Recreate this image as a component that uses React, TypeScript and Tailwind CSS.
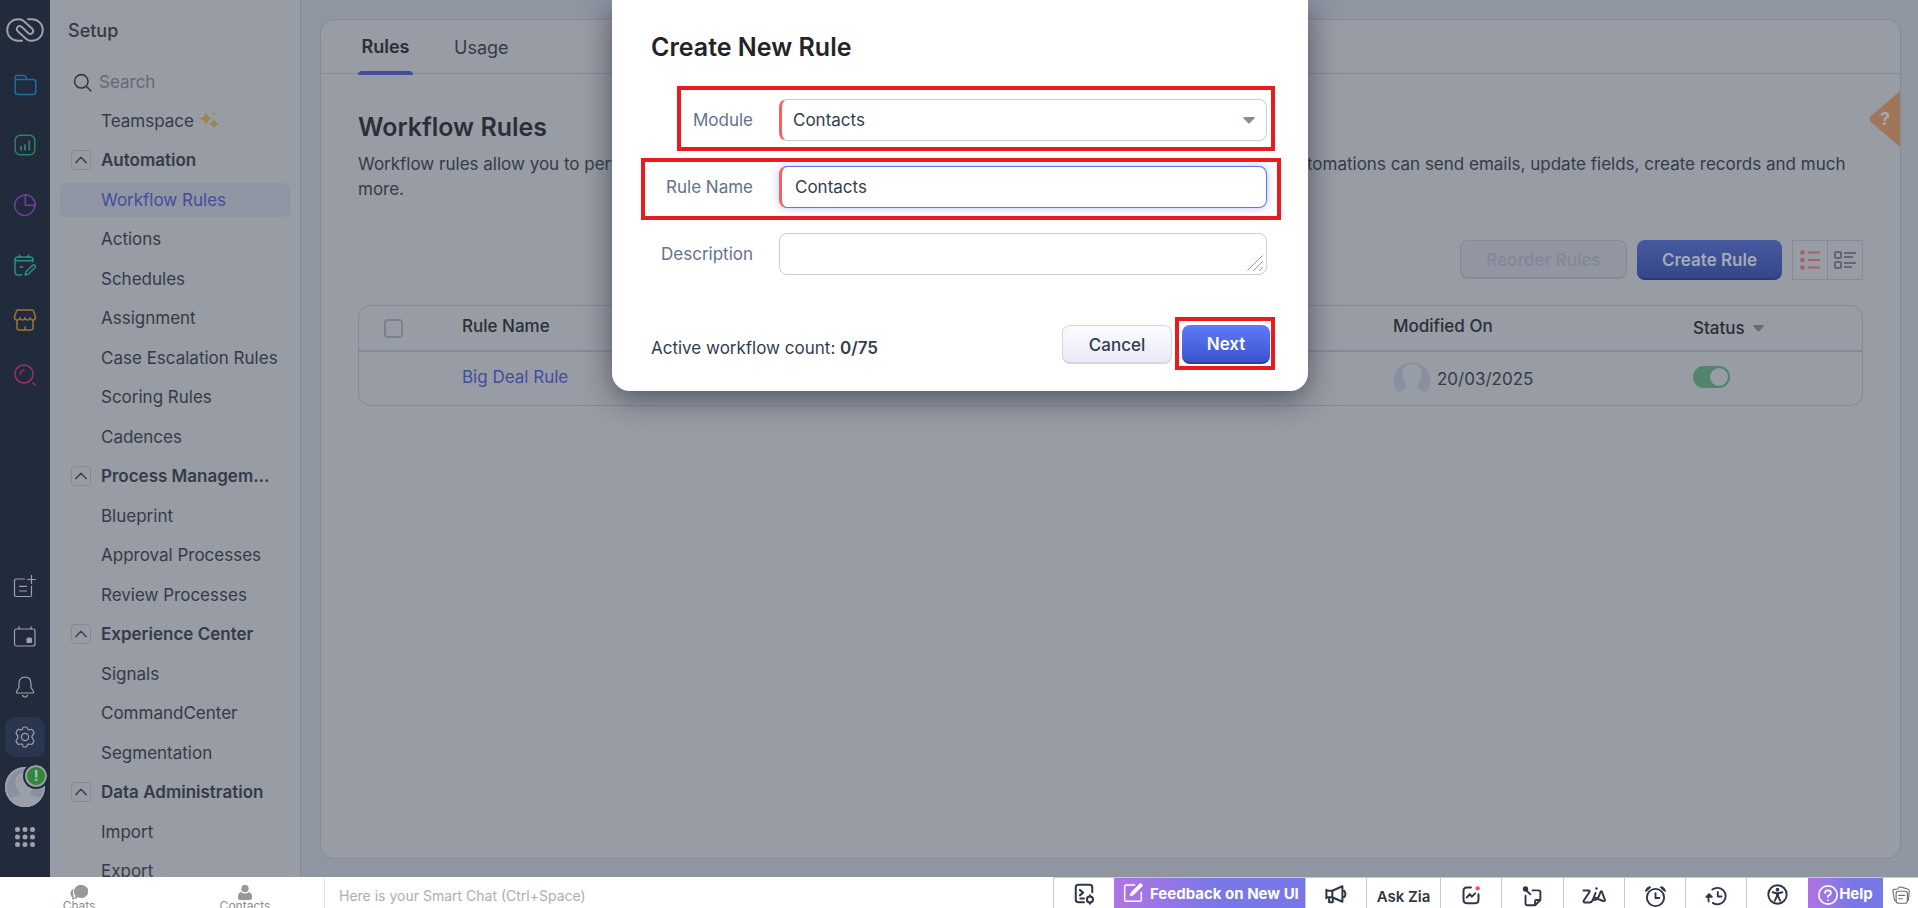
import type { ReactNode } from "react";

const setupItems = [
  { label: "Teamspace", sparkle: true },
  { label: "Automation", group: true },
  { label: "Workflow Rules", active: true },
  { label: "Actions" },
  { label: "Schedules" },
  { label: "Assignment" },
  { label: "Case Escalation Rules" },
  { label: "Scoring Rules" },
  { label: "Cadences" },
  { label: "Process Managem...", group: true },
  { label: "Blueprint" },
  { label: "Approval Processes" },
  { label: "Review Processes" },
  { label: "Experience Center", group: true },
  { label: "Signals" },
  { label: "CommandCenter" },
  { label: "Segmentation" },
  { label: "Data Administration", group: true },
  { label: "Import" },
  { label: "Export" },
];

function Icon({
  size = 24,
  stroke = 1.5,
  className = "",
  children,
}: {
  size?: number;
  stroke?: number;
  className?: string;
  children: ReactNode;
}) {
  return (
    <svg
      width={size}
      height={size}
      viewBox="0 0 24 24"
      fill="none"
      stroke="currentColor"
      strokeWidth={stroke}
      strokeLinecap="round"
      strokeLinejoin="round"
      className={`shrink-0 ${className}`}
      aria-hidden="true"
    >
      {children}
    </svg>
  );
}

function RailButton({
  label,
  className = "",
  children,
}: {
  label: string;
  className?: string;
  children: ReactNode;
}) {
  return (
    <button
      type="button"
      aria-label={label}
      className={`flex size-10 shrink-0 items-center justify-center rounded-[10px] ${className}`}
    >
      {children}
    </button>
  );
}

function Rail() {
  return (
    <nav className="flex w-[50px] shrink-0 flex-col items-center bg-[#212b3c] pt-[18px] pb-5 text-[#9da1a9]">
      <svg width="38" height="24" viewBox="0 0 38 24" fill="none" stroke="currentColor" strokeWidth="1.900" strokeLinecap="round" aria-hidden="true">
        <path d="M16 22.800H12A10.800 10.800 0 0 1 12 1.200H13C15 1.200 16.500 2 18 3.300L26 10.500C29 13.500 25.500 17.800 22.500 15.200L15.500 8.800C12.500 6.200 9 10.500 12 13.500L20 20.700C21.500 22 23 22.800 25 22.800H26A10.800 10.800 0 0 0 26 1.200H22" />
      </svg>

      <div className="mt-[23px] flex flex-col gap-5">
        <RailButton label="Folders" className="text-[#1c6fa5]">
          <Icon>
            <path d="M2.200 7V4.200Q2.200 2.400 4 2.400H11Q12.500 2.400 12.900 4L13.700 6.500H19.800Q22.800 6.500 22.800 9.500V18.500Q22.800 21.500 19.800 21.500H5Q2.200 21.500 2.200 18.700V6.500H13.700" />
          </Icon>
        </RailButton>
        <RailButton label="Reports" className="text-[#30835f]">
          <Icon>
            <rect x="2.200" y="2.200" width="19.600" height="19.600" rx="5" />
            <path d="M8 14V16.800M12 12V16.800M16.300 8.500V16.800" strokeWidth="1.800" />
          </Icon>
        </RailButton>
        <RailButton label="Analytics" className="text-[#703f9c]">
          <Icon>
            <path d="M8.800 2.800A10 10 0 1 0 21.500 14" />
            <path d="M12.300 1.800A10 10 0 0 1 22.200 12.300H12.300Z" />
            <path d="M22 12.300L21.500 14M12.300 2L8.800 2.800" />
          </Icon>
        </RailButton>
        <RailButton label="My requests" className="text-[#289080]">
          <Icon>
            <path d="M20 8.800V7Q20 4 17 4H5Q2 4 2 7V19Q2 22 5 22H8.500M2.300 7.700H19.800M6.500 2V4.500M15.500 2V4.500M7.300 14H9.800" />
            <path d="M12.200 22L13 18.800L19.700 12.200Q21 11.300 22 12.300Q22.900 13.300 22 14.500L15.300 21.200Z" />
          </Icon>
        </RailButton>
      </div>
      <div className="mt-[15px] flex flex-col gap-[15px]">
        <RailButton label="Marketplace" className="text-[#a2742e]">
          <Icon>
            <path d="M5 2H19Q20 2 20.500 3L22.500 9Q22.500 12 20 12Q17.500 12 17 9.800Q16.500 12 14.500 12Q12.500 12 12 9.800Q11.500 12 9.500 12Q7.500 12 7 9.800Q6.500 12 4 12Q1.500 12 1.500 9L3.500 3Q4 2 5 2Z" />
            <path d="M4 12.500V20Q4 22 6 22H18Q20 22 20 20V12.500M12 19V21.500" />
          </Icon>
        </RailButton>
        <RailButton label="Zia search" className="text-[#9c3064]">
          <Icon>
            <circle cx="11" cy="11" r="9" />
            <path d="M7.300 11.200Q7.500 7.800 11 7.300M19.800 20L22 22" />
          </Icon>
        </RailButton>
      </div>

      <div className="mt-auto flex flex-col gap-[10px]">
        <RailButton label="New note">
          <Icon stroke={1.2}>
            <path d="M11.500 4H3Q1.500 4 1.500 5.500V20Q1.500 21.500 3 21.500H17Q18.500 21.500 18.500 20V11M6.500 11.300H13.500M6.500 16H13.500M18.500 0.500V8.500M14.500 4.500H22.500" />
          </Icon>
        </RailButton>
        <RailButton label="Calendar">
          <Icon stroke={1.2}>
            <rect x="1.500" y="4" width="20.500" height="17" rx="2" />
            <path d="M6 1.500V4M18 1.500V4" />
            <rect x="14" y="13" width="4.500" height="4.500" rx="1" fill="currentColor" />
          </Icon>
        </RailButton>
        <RailButton label="Notifications">
          <Icon stroke={1.2}>
            <path d="M12 2.200C7.500 2.200 6 5.500 6 8.500V12.500L3.500 16.500Q3 18 4.500 18H19.500Q21 18 20.500 16.500L18 12.500V8.500C18 5.500 16.500 2.200 12 2.200ZM9.500 20.500Q12 23.500 14.500 20.500" />
          </Icon>
        </RailButton>
        <RailButton label="Setup" className="bg-[#2a3650]">
          <Icon stroke={1.2}>
            <path d="M9.800 3.200Q10.100 2 11.200 2H12.800Q13.900 2 14.200 3.200Q14.700 5.300 16.800 4.800Q18.700 4 19.500 5L20.800 7.300Q21.300 8.300 20.400 9.300Q18.300 11 19.300 13.200L20.600 15Q21.200 15.800 20.700 16.700L19.600 18.600Q19 19.600 17.600 19.300Q14.700 18.200 14.100 20.900Q13.800 22 12.800 22H11.200Q10.200 22 9.900 20.900Q9.300 18.200 6.400 19.300Q5 19.600 4.400 18.600L3.300 16.700Q2.800 15.800 3.400 15L4.700 13.200Q5.700 11 3.600 9.300Q2.700 8.300 3.200 7.300L4.500 5Q5.300 4 7.200 4.800Q9.300 5.300 9.800 3.200Z" />
            <circle cx="12" cy="12" r="3.600" />
          </Icon>
        </RailButton>
        <button type="button" aria-label="Profile" className="relative size-10">
          <svg width="40" height="40" viewBox="0 0 40 40" aria-hidden="true">
            <clipPath id="profile">
              <circle cx="20" cy="20" r="20" />
            </clipPath>
            <g clipPath="url(#profile)">
              <rect width="40" height="40" fill="#8991a0" />
              <path d="M20 5C14 5 10.500 9 10.500 14C10.500 19 12 22 14.500 25V27C14 29 4 30 2 34V40H38V34C36 30 26 29 25.500 27V25C28 22 29.500 19 29.500 14C29.500 9 26 5 20 5Z" fill="#9b9fa7" />
            </g>
            <circle cx="20" cy="20" r="19" fill="none" stroke="#9b9fa7" strokeWidth="2" />
          </svg>
          <span className="absolute -top-0.5 -right-0.5 flex size-[22px] items-center justify-center rounded-full border-2 border-[#9b9fa7] bg-[#33863b] text-sm font-bold text-[#b5bcc2] outline-2 outline-[#212b3c]">
            !
          </span>
        </button>
        <RailButton label="All apps">
          <svg width="20" height="20" viewBox="0 0 20 20" fill="currentColor" aria-hidden="true">
            {[2.5, 10, 17.5].map((y) =>
              [2.5, 10, 17.5].map((x) => <circle key={`${x}-${y}`} cx={x} cy={y} r="2.500" />)
            )}
          </svg>
        </RailButton>
      </div>
    </nav>
  );
}

function SetupMenu() {
  return (
    <aside className="flex w-[251px] shrink-0 flex-col overflow-hidden border-r border-[#868b9c] bg-[#989ca4] text-[#343b4b]">
      <h2 className="mt-[19px] ml-[18px] text-lg leading-6 font-medium">Setup</h2>
      <label className="mt-[27px] ml-[23px] flex h-6 shrink-0 items-center gap-[7px]">
        <Icon size={19} stroke={2}>
          <circle cx="10.500" cy="10.500" r="8.500" />
          <path d="M17 17L22.500 22.500" />
        </Icon>
        <input
          type="text"
          aria-label="Search setup"
          placeholder="Search"
          className="w-40 bg-transparent outline-none placeholder:text-[#626979]"
        />
      </label>
      <ul className="mt-[7px] grid h-[790px] shrink-0 auto-rows-fr px-[10px]">
        {setupItems.map((item) => (
          <li key={item.label} className="flex items-center">
            {item.group ? (
              <button type="button" className="flex items-center gap-[10px] pl-[11px] font-semibold">
                <span className="flex size-5 items-center justify-center rounded border border-[#858a9b]">
                  <Icon size={16} stroke={2}>
                    <path d="M4 16L12 8L20 16" />
                  </Icon>
                </span>
                {item.label}
              </button>
            ) : (
              <a
                href="#"
                className={`flex h-[34px] w-full items-center gap-[5px] rounded-md pl-[41px] ${
                  item.active ? "bg-[#8f95a3] text-[#434d9d]" : ""
                }`}
              >
                {item.label}
                {item.sparkle && (
                  <svg width="20" height="17" viewBox="0 0 20 17" fill="#98884e" aria-hidden="true">
                    <path d="M7 0Q8 5 13 6.500Q8 8 7 13Q6 8 0 6.500Q6 5 7 0Z" />
                    <path d="M15 7Q16 10.500 20 11.700Q16 13 15 16.500Q14 13 10 11.700Q14 10.500 15 7Z" />
                    <circle cx="15" cy="1.500" r="1.200" />
                  </svg>
                )}
              </a>
            )}
          </li>
        ))}
      </ul>
    </aside>
  );
}

function RulesPage() {
  return (
    <main className="flex min-w-0 flex-1 bg-[#8f95a1] pt-[19px] pr-[17px] pb-[18px] pl-[19px]">
      <div className="relative flex min-w-0 flex-1 flex-col rounded-[14px] border border-[#858a9b] bg-[#989ca4] text-[#343b4b]">
        <div className="flex h-[54px] shrink-0 gap-[31px] border-b border-[#858a9b] pl-[37px] text-lg">
          <button type="button" className="-mb-0.5 flex flex-col items-center justify-end font-semibold text-[#2a2f39]">
            <span className="mb-3 leading-6">Rules</span>
            <span className="h-1 w-[55px] rounded-t-sm bg-[#434d9d]" />
          </button>
          <button type="button" className="px-[10px] pb-3 pt-[15px] leading-6">
            Usage
          </button>
        </div>

        <section className="px-[37px] pt-[37px]">
          <h1 className="text-[25px] leading-8 font-semibold text-[#2a2f39]">Workflow Rules</h1>
          <p className="mt-[9px] leading-[25px]">
            Workflow rules allow you to perform certain automatic actions on specific records based on filter criteria.
            Workflow automations can send emails, update fields, create records and much more.
          </p>

          <div className="mt-[38px] flex h-10 justify-end">
            <button
              type="button"
              disabled
              className="h-[39px] w-[167px] rounded-lg border border-b-2 border-[#858a9b] bg-[#9296a0] pt-px font-semibold text-[#83889a]"
            >
              Reorder Rules
            </button>
            <button
              type="button"
              className="ml-[10px] w-[145px] rounded-lg border-b-2 border-[#2a3a74] bg-linear-to-b from-[#4759a0] to-[#35478a] pt-0.5 font-semibold text-[#a4abb9]"
            >
              Create Rule
            </button>
            <div className="ml-[10px] flex w-[71px] divide-x divide-[#858a9b] border border-[#858a9b]">
              <button type="button" aria-label="List view" className="flex flex-1 items-center justify-center text-[#a95f68]">
                <svg width="20" height="20" viewBox="0 0 20 20" fill="currentColor" aria-hidden="true">
                  <circle cx="2.500" cy="2.500" r="2.300" />
                  <circle cx="2.500" cy="10" r="2.300" />
                  <circle cx="2.500" cy="17.500" r="2.300" />
                  <path d="M8 1.500H20V3.500H8ZM8 9H20V11H8ZM8 16.500H20V18.500H8Z" />
                </svg>
              </button>
              <button type="button" aria-label="Detail view" className="flex flex-1 items-center justify-center text-[#616775]">
                <svg width="22" height="18" viewBox="0 0 22 18" fill="none" stroke="currentColor" strokeWidth="2" aria-hidden="true">
                  <rect x="1" y="1" width="6" height="6" rx="1" />
                  <rect x="1" y="11" width="6" height="6" rx="1" />
                  <path d="M10 2H22M10 6H19M10 12H22M10 16H18" strokeWidth="1.800" />
                </svg>
              </button>
            </div>
          </div>

          <div className="mt-[25px] overflow-hidden rounded-xl border border-[#858a9b]">
            <table className="w-full table-fixed text-left">
              <thead>
                <tr className="h-[45px] border-b-2 border-[#828b9b] text-[#2a2f39]">
                  <th className="w-[103px] pl-[25px]">
                    <input
                      type="checkbox"
                      aria-label="Select all rules"
                      className="block size-[19px] appearance-none rounded border-2 border-[#7b8092]"
                    />
                  </th>
                  <th className="pb-1 font-medium">Rule Name</th>
                  <th className="w-[300px] pb-1 font-medium">Modified On</th>
                  <th className="w-[169px] font-medium">
                    <span className="flex items-center gap-2">
                      Status
                      <svg width="11" height="7" viewBox="0 0 11 7" fill="#666c7a" aria-hidden="true">
                        <path d="M1 0H10Q11.500 0 10.500 1.300L6.500 6Q5.500 7 4.500 6L0.500 1.300Q-0.500 0 1 0Z" />
                      </svg>
                    </span>
                  </th>
                </tr>
              </thead>
              <tbody>
                <tr className="h-[54px]">
                  <td />
                  <td className="pb-1">
                    <a href="#" className="text-[#434d9d]">
                      Big Deal Rule
                    </a>
                  </td>
                  <td>
                    <span className="flex items-center gap-[6px]">
                      <svg width="38" height="38" viewBox="0 0 38 38" aria-hidden="true">
                        <path
                          d="M19 4C13 4 9.500 8 9.500 13C9.500 18 11 21 13 24C14 28 12 30 5 33A18.500 18.500 0 1 1 33 33C26 30 24 28 25 24C27 21 28.500 18 28.500 13C28.500 8 25 4 19 4Z"
                          fill="#8990a0"
                        />
                      </svg>
                      20/03/2025
                    </span>
                  </td>
                  <td>
                    <label className="mb-1 block w-[37px]">
                      <input type="checkbox" role="switch" defaultChecked aria-label="Rule status" className="peer sr-only" />
                      <span className="flex h-[22px] items-center justify-end rounded-full bg-[#52856b] px-0.5">
                        <span className="size-[18px] rounded-full bg-[#989ca4]" />
                      </span>
                    </label>
                  </td>
                </tr>
              </tbody>
            </table>
          </div>
        </section>

        <button type="button" aria-label="Help tips" className="absolute top-[71px] right-0">
          <svg width="31" height="56" viewBox="0 0 31 56" aria-hidden="true">
            <path d="M31 0V56L2 31Q-1 28 2 25Z" fill="#a0765a" />
            <text x="16" y="34" textAnchor="middle" fontSize="18" fontWeight="700" fill="#a6a9b0">
              ?
            </text>
          </svg>
        </button>
      </div>
    </main>
  );
}

function RuleDialog() {
  const field = "h-[42px] w-full rounded-lg border bg-white outline-none";

  return (
    <div className="absolute inset-x-0 top-0 flex justify-center pl-0.5">
      <form
        role="dialog"
        aria-labelledby="dialog-title"
        className="relative w-full max-w-[696px] rounded-b-[18px] bg-white px-[39px] pt-[31px] pb-[27px] text-[#343c4e] shadow-[0_8px_30px_rgba(40,48,66,0.65)]"
      >
        <h2 id="dialog-title" className="text-[25px] leading-8 font-semibold text-[#222427]">
          Create New Rule
        </h2>

        <div className="mt-9 mr-[2px] grid grid-cols-[102px_1fr] items-center gap-x-[26px] gap-y-[25px]">
          <label htmlFor="module" className="text-right text-[#65718d]">
            Module
          </label>
          <div className="relative">
            <select
              id="module"
              className={`${field} appearance-none border-[#ccccd9] border-l-3 border-l-[#ff5c5c] pl-[11px]`}
            >
              <option>Contacts</option>
            </select>
            <svg
              width="12"
              height="7"
              viewBox="0 0 12 7"
              fill="#868d97"
              className="pointer-events-none absolute top-[18px] right-3"
              aria-hidden="true"
            >
              <path d="M1 0H11Q12.500 0 11.500 1.300L7 6Q6 7 5 6L0.500 1.300Q-0.500 0 1 0Z" />
            </svg>
          </div>

          <label htmlFor="rule-name" className="text-right text-[#65718d]">
            Rule Name
          </label>
          <input
            id="rule-name"
            type="text"
            defaultValue="Contacts"
            className={`${field} border-[#5f70f5] border-l-3 border-l-[#ff5c5c] pl-[13px] shadow-[0_0_10px_rgba(95,112,245,0.4)]`}
          />

          <label htmlFor="description" className="text-right text-[#65718d]">
            Description
          </label>
          <div className="relative">
            <textarea id="description" rows={1} className={`${field} block resize-none border-[#ccccd9] px-3 py-2`} />
            <Icon size={16} stroke={1.5} className="pointer-events-none absolute right-1 bottom-1 text-[#96999f]">
              <path d="M1 23L23 1M10 23L23 10M19 23L23 19" />
            </Icon>
          </div>
        </div>

        <div className="mt-[50px] -mr-px flex h-[39px] items-center">
          <p className="flex-1 pt-1.5">
            Active workflow count: <span className="font-semibold">0/75</span>
          </p>
          <button
            type="button"
            className="h-full w-[110px] rounded-lg border border-b-2 border-[#d4d5e6] bg-linear-to-b from-[#fcfcff] to-[#eaeaf6] pt-px font-medium"
          >
            Cancel
          </button>
          <button
            type="button"
            className="ml-[10px] h-full w-[88px] rounded-lg border-b-2 border-[#2b41a8] bg-linear-to-b from-[#607bfb] to-[#3b53cc] pt-px font-semibold text-white"
          >
            Next
          </button>
        </div>

        {/* highlights for the walkthrough steps */}
        <span className="pointer-events-none absolute top-[86px] right-[33px] left-[65px] h-[65px] border-4 border-[#e81c1e]" />
        <span className="pointer-events-none absolute top-[158px] right-[27px] left-[29px] h-[62px] border-4 border-[#e81c1e]" />
        <span className="pointer-events-none absolute right-[33px] bottom-[21px] h-[53px] w-[100px] border-4 border-[#e81c1e]" />
      </form>
    </div>
  );
}

function BarButton({ label, className, children }: { label: string; className: string; children: ReactNode }) {
  return (
    <button
      type="button"
      aria-label={label}
      className={`flex shrink-0 items-start justify-center border-l border-[#c6c6d3] ${className}`}
    >
      {children}
    </button>
  );
}

function BottomBar() {
  return (
    <footer className="z-10 flex h-[31px] shrink-0 overflow-hidden bg-white text-[#2f3747]">
      <div className="flex w-[325px] shrink-0 border-r border-[#e3e3e3] text-xs leading-3 text-[#8d8d8d]">
        <button type="button" className="flex w-[158px] flex-col items-center pt-2">
          <svg width="18" height="15" viewBox="0 0 18 15" fill="#989898" className="shrink-0" aria-hidden="true">
            <path d="M11 0A7 6.500 0 1 1 8 12.200L4.500 14.500L5.500 11A6.700 6.700 0 0 1 11 0Z" />
            <path d="M3.500 3.500Q0 6 0.500 9.500Q1 11.500 2.500 12.500L2 15L5 13.500Q2 10 3.500 3.500Z" />
          </svg>
          Chats
        </button>
        <button type="button" className="flex flex-1 flex-col items-center pt-2 pl-2">
          <svg width="14" height="15" viewBox="0 0 14 15" fill="#989898" className="shrink-0" aria-hidden="true">
            <circle cx="7" cy="3.500" r="3.700" />
            <path d="M3 7Q7 10 11 7Q14 8 14 11V13Q14 15 12 15H2Q0 15 0 13V11Q0 8 3 7Z" />
          </svg>
          Contacts
        </button>
      </div>
      <input
        type="text"
        aria-label="Smart Chat"
        placeholder="Here is your Smart Chat (Ctrl+Space)"
        className="min-w-0 flex-1 px-[14px] pt-1.5 text-sm outline-none placeholder:text-[#aeaeae]"
      />

      <div className="flex shrink-0 border-t border-[#c6c6d3]">
        <BarButton label="Developer console" className="w-[61px] pt-[5px]">
          <Icon size={22} stroke={2.2}>
            <path d="M21 10V5Q21 2 18 2H6Q3 2 3 5V18Q3 21 6 21H12M7.500 7.500L11 10.500L7.500 13.500M8 17H12" />
            <circle cx="18.500" cy="18" r="3.300" />
            <path d="M18.500 13.500V14.500M18.500 21.500V22.500" />
          </Icon>
        </BarButton>
        <button
          type="button"
          className="flex w-[191px] items-start gap-[7px] bg-linear-to-r from-[#b073e3] to-[#7877e8] to-55% pt-1 pl-[9px] text-[15px] leading-6 font-bold whitespace-nowrap text-white"
        >
          <Icon size={20} stroke={1.8} className="mt-px">
            <path d="M14 2.500H4Q2 2.500 2 4.500V20Q2 22 4 22H20Q22 22 22 20V11" />
            <path d="M21 1L23 3L12.500 13.500L9 15L10.500 11.500Z" fill="currentColor" />
          </Icon>
          Feedback on New UI
        </button>
        <BarButton label="Announcements" className="w-[61px] pt-[5px]">
          <Icon size={22} stroke={2.2}>
            <path d="M1.500 7.500V16.500M1.500 8.500H8L19 3.500V20.500L8 15.500H1.500M8 8.500V15.500M4.500 16V21H8.500V16M21 8.500Q23.500 12 21 15.500" />
          </Icon>
        </BarButton>
        <button type="button" className="w-[74px] border-l border-[#c6c6d3] pt-[7px] text-[15px] leading-6 font-semibold">
          Ask Zia
        </button>
        <BarButton label="Insights" className="w-[61px] pt-[7px]">
          <Icon size={20} stroke={2.4}>
            <path d="M12 3H7Q3 3 3 7V17Q3 22 8 22H16Q21 22 21 17V11M7 15L10.500 11L13 14L17 10" />
            <circle cx="20" cy="4" r="2.600" fill="#ff4f55" stroke="none" />
          </Icon>
        </BarButton>
        <BarButton label="Sticky notes" className="w-[62px] pt-[8px]">
          <Icon size={21} stroke={2.2}>
            <path d="M4 11V20Q4 22 6 22H15L21 16V7Q21 5 19 5H12M15 22V17Q15 16 16 16H21M4 4L9.500 9.500" />
            <circle cx="4" cy="3.500" r="2" fill="currentColor" />
          </Icon>
        </BarButton>
        <BarButton label="Zia" className="w-[61px] pt-[9px]">
          <svg width="24" height="17" viewBox="0 0 24 17" fill="none" stroke="currentColor" strokeWidth="2" strokeLinecap="round" strokeLinejoin="round" aria-hidden="true">
            <path d="M1.500 3.500H6.500Q8.500 3.500 7.200 5.500L1.800 13.500Q1 15.500 3 15.500H7.500Q9.500 15.500 10.500 13.500L13.500 6" />
            <path d="M12 13Q15 13 17 9L18.500 5Q19.300 3.500 20 5L22.800 12.500Q23.300 14.500 21 14L12.500 10.500" />
            <circle cx="14.500" cy="1.500" r="1.200" fill="currentColor" stroke="none" />
          </svg>
        </BarButton>
        <BarButton label="Reminders" className="w-[61px] pt-[7px]">
          <Icon size={23} stroke={2}>
            <circle cx="12" cy="13" r="9" />
            <path d="M12 8.500V13.500H16" />
            <path d="M1.500 6Q2.500 2.500 6 1.500L7 2.500L2.500 6.500ZM22.500 6Q21.500 2.500 18 1.500L17 2.500L21.500 6.500Z" fill="currentColor" strokeWidth="1" />
          </Icon>
        </BarButton>
        <BarButton label="Recent items" className="w-[61px] pt-[7px]">
          <Icon size={22} stroke={2}>
            <path d="M8 5A9 9 0 1 1 8.500 19.500M14 7.500V12.500H18M4 18Q3 14 4.500 11M1.500 13L4.500 10L7.500 13Z" />
          </Icon>
        </BarButton>
        <BarButton label="Accessibility" className="w-[62px] pt-[6px]">
          <Icon size={21} stroke={2.2}>
            <circle cx="12" cy="12" r="10.500" />
            <path d="M6.500 9.500L11 10.500H13L17.500 9.500M12 10.500V14M11.300 11V14L9 19M12.700 11V14L15 19" />
            <circle cx="12" cy="6.500" r="1" fill="currentColor" />
          </Icon>
        </BarButton>
        <button
          type="button"
          className="flex w-[75px] items-start justify-center gap-px bg-linear-to-r from-[#b073e3] to-[#7877e8] to-60% pt-1 text-[15px] leading-6 font-bold text-white"
        >
          <Icon size={20} stroke={2} className="mt-[3px]">
            <circle cx="12" cy="12" r="11" />
            <path d="M8.500 9.500Q8.500 6.500 12 6.500Q15.500 6.500 15.500 9.500Q15.500 11.500 12 13V14.500M12 18V18.200" />
          </Icon>
          Help
        </button>
        <button type="button" aria-label="Clipboard" className="flex w-[35px] items-start justify-center pt-[8px] text-[#6d6d6d]">
          <Icon size={18} stroke={1.5}>
            <rect x="5.500" y="7" width="15" height="16" rx="3" />
            <path d="M9 12.500H17M9 17H14M5 20Q3.500 20 3.200 18L1.200 7Q1 5 3 4.500L8 4M21 19.500Q22 19 22 18L23 7Q23 4.500 21 4L12 1.500Q9.500 1 8 3" />
          </Icon>
        </button>
      </div>
    </footer>
  );
}

export default function App() {
  return (
    <div className="flex h-screen flex-col overflow-hidden font-[Inter,sans-serif] text-[17px] leading-6">
      <div className="relative flex min-h-0 flex-1 overflow-hidden">
        <Rail />
        <SetupMenu />
        <RulesPage />
        <RuleDialog />
      </div>
      <BottomBar />
    </div>
  );
}
